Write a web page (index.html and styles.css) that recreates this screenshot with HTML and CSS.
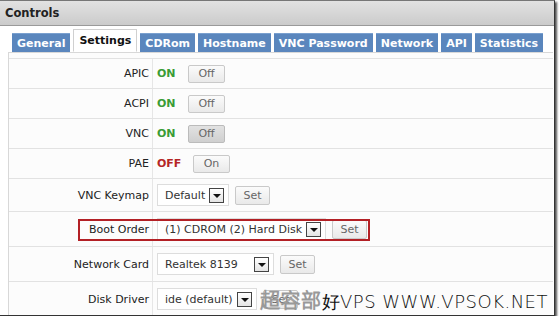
FILE: index.html
```html
<!DOCTYPE html>
<html lang="en">
<head>
<meta charset="utf-8"/>
<title>Controls</title>
<link rel="stylesheet" href="styles.css">
</head>
<body>
<div class="window">
<div class="title">Controls</div>
<ul class="tabs">
<li>General</li>
<li class="active">Settings</li>
<li>CDRom</li>
<li>Hostname</li>
<li>VNC Password</li>
<li>Network</li>
<li>API</li>
<li>Statistics</li>
</ul>
<div class="panel">
<div class="row">
<div class="label">APIC</div>
<div class="value"><span class="on">ON</span><button class="btn">Off</button></div>
</div>
<div class="row">
<div class="label">ACPI</div>
<div class="value"><span class="on">ON</span><button class="btn">Off</button></div>
</div>
<div class="row">
<div class="label">VNC</div>
<div class="value"><span class="on">ON</span><button class="btn pressed">Off</button></div>
</div>
<div class="row">
<div class="label">PAE</div>
<div class="value"><span class="off">OFF</span><button class="btn">On</button></div>
</div>
<div class="row tall first-tall">
<div class="label">VNC Keymap</div>
<div class="value"><span class="select w-keymap">Default<i class="arrow"></i></span><button class="btn set">Set</button></div>
</div>
<div class="row tall">
<div class="label">Boot Order</div>
<div class="value"><span class="select w-boot">(1) CDROM (2) Hard Disk<i class="arrow"></i></span><button class="btn set">Set</button></div>
<div class="highlight"></div>
</div>
<div class="row tall">
<div class="label">Network Card</div>
<div class="value"><span class="select w-net">Realtek 8139<i class="arrow"></i></span><button class="btn set">Set</button></div>
</div>
<div class="row tall">
<div class="label">Disk Driver</div>
<div class="value"><span class="select w-disk">ide (default)<i class="arrow"></i></span><button class="btn set">Set</button></div>
</div>
</div>
<div class="watermark"><span class="outline">超容部</span>好VPS WWW.VPSOK.NET</div>
</div>
</body>
</html>
```

FILE: styles.css
```css
body {
    margin: 0;
    background: #fff;
    font-family: 'DejaVu Sans', Verdana, sans-serif;
    font-size: 11px;
    color: #333;
}
.window {
    position: relative;
    width: 554px;
    height: 314px;
    border-top: 1px solid #777;
    border-right: 1px solid #333;
    border-bottom: 1px solid #333;
    box-shadow: 2px 2px 2px #555;
    overflow: hidden;
    background: #fff;
}
.title {
    height: 24px;
    line-height: 25px;
    padding-left: 5px;
    font-weight: bold;
    font-size: 11.5px;
    color: #222;
    background: linear-gradient(#e2e2e2, #cbcbcb);
    border-bottom: 1px solid #9a9a9a;
}
.tabs {
    list-style: none;
    margin: 0;
    padding: 5px 0 0 12px;
    display: flex;
    gap: 3px;
    align-items: flex-end;
    height: 21px;
    position: relative;
    z-index: 1;
}
.tabs li {
    height: 18px;
    line-height: 19px;
    padding: 0 5px;
    background: #5a86bd;
    border-top: 1px solid #7aa0cf;
    color: #fff;
    font-weight: bold;
    font-size: 11px;
}
.tabs li.active {
    height: 21px;
    line-height: 22px;
    background: #fff;
    color: #111;
    border: 1px solid #d0d0d0;
    border-bottom: 1px solid #fff;
}
.panel {
    margin: 0 1px 0 8px;
    padding-top: 5px;
    border-left: 1px solid #d8d8d8;
    border-top: 1px solid #d8d8d8;
    background: #fcfcfc;
}
.row {
    position: relative;
    display: grid;
    grid-template-columns: 144px 1fr;
    height: 29px;
    border-bottom: 1px solid #e2e2e2;
}
.row:first-child {
    border-top: 1px solid #e2e2e2;
}
.row.tall {
    height: 34px;
}
.row.first-tall {
    height: 32px;
}
.label {
    padding-right: 3px;
    border-right: 1px solid #e6e6e6;
    display: flex;
    align-items: center;
    justify-content: flex-end;
    color: #222;
    font-size: 11px;
}
.value {
    display: flex;
    align-items: center;
    padding-left: 4px;
    gap: 8px;
}
.on {
    color: #3a9c35;
    font-weight: bold;
    width: 23px;
}
.off {
    color: #b52626;
    font-weight: bold;
    width: 28px;
}
.btn {
    font-family: inherit;
    font-size: 11px;
    color: #666;
    height: 18px;
    width: 37px;
    padding: 0;
    border: 1px solid #c9c9c9;
    border-radius: 2px;
    background: linear-gradient(#fbfbfb, #e9e9e9);
}
.btn.pressed {
    background: linear-gradient(#e2e2e2, #cfcfcf);
    border-color: #bbb;
}
.btn.set {
    width: 35px;
    height: 19px;
}
.select {
    display: flex;
    align-items: center;
    justify-content: space-between;
    white-space: nowrap;
    height: 20px;
    padding: 0 4px 0 7px;
    border: 1px solid #ddd;
    background: #fff;
    color: #333;
    font-size: 11px;
}
.select + .btn {
    margin-left: -2px;
}
.arrow {
    flex: none;
    width: 13px;
    height: 13px;
    border: 1px solid #444;
    background: linear-gradient(#fff, #e4e4e4);
    position: relative;
    margin-left: 4px;
}
.arrow::after {
    content: "";
    position: absolute;
    left: 3px;
    top: 5px;
    border-left: 4px solid transparent;
    border-right: 4px solid transparent;
    border-top: 4px solid #111;
}
.w-keymap { width: 59px; }
.w-boot { width: 156px; }
.w-net { width: 104px; }
.w-disk { width: 87px; }
.highlight {
    position: absolute;
    left: 69px;
    top: 7px;
    width: 288px;
    height: 18px;
    border: 2px solid #b32025;
}
.watermark {
    position: absolute;
    right: 6px;
    bottom: 1px;
    font-family: 'DejaVu Sans', sans-serif;
    font-weight: 200;
    font-size: 18px;
    color: #111;
    letter-spacing: 0.5px;
}
.outline {
    font-family: 'Noto Sans CJK SC', sans-serif;
    color: transparent;
    -webkit-text-stroke: 1px #999;
    font-size: 20px;
}
```
